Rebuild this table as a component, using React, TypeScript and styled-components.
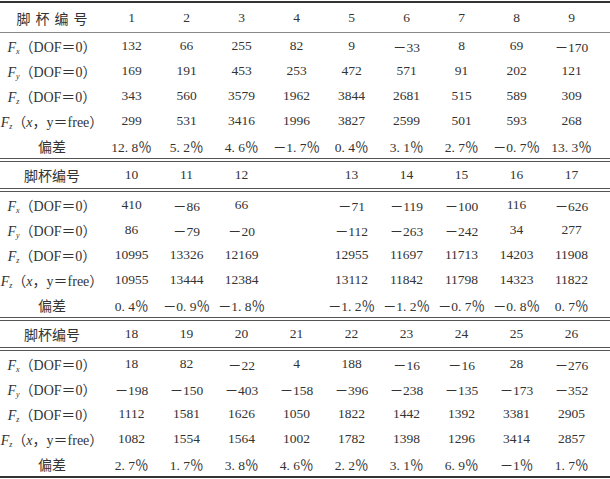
import styled, { createGlobalStyle } from "styled-components"

const GlobalStyle = createGlobalStyle`
    html, body {
        margin: 0;
        padding: 0;
        background: #fff;
    }
`

type BlockData = {
    ids: string[]
    fx: string[]
    fy: string[]
    fz: string[]
    free: string[]
    dev: string[]
}

const blocks: BlockData[] = [
    {
        ids: ["1", "2", "3", "4", "5", "6", "7", "8", "9"],
        fx: ["132", "66", "255", "82", "9", "－33", "8", "69", "－170"],
        fy: ["169", "191", "453", "253", "472", "571", "91", "202", "121"],
        fz: ["343", "560", "3579", "1962", "3844", "2681", "515", "589", "309"],
        free: ["299", "531", "3416", "1996", "3827", "2599", "501", "593", "268"],
        dev: ["12. 8％", "5. 2％", "4. 6％", "－1. 7％", "0. 4％", "3. 1％", "2. 7％", "－0. 7％", "13. 3％"],
    },
    {
        ids: ["10", "11", "12", "", "13", "14", "15", "16", "17"],
        fx: ["410", "－86", "66", "", "－71", "－119", "－100", "116", "－626"],
        fy: ["86", "－79", "－20", "", "－112", "－263", "－242", "34", "277"],
        fz: ["10995", "13326", "12169", "", "12955", "11697", "11713", "14203", "11908"],
        free: ["10955", "13444", "12384", "", "13112", "11842", "11798", "14323", "11822"],
        dev: ["0. 4％", "－0. 9％", "－1. 8％", "", "－1. 2％", "－1. 2％", "－0. 7％", "－0. 8％", "0. 7％"],
    },
    {
        ids: ["18", "19", "20", "21", "22", "23", "24", "25", "26"],
        fx: ["18", "82", "－22", "4", "188", "－16", "－16", "28", "－276"],
        fy: ["－198", "－150", "－403", "－158", "－396", "－238", "－135", "－173", "－352"],
        fz: ["1112", "1581", "1626", "1050", "1822", "1442", "1392", "3381", "2905"],
        free: ["1082", "1554", "1564", "1002", "1782", "1398", "1296", "3414", "2857"],
        dev: ["2. 7％", "1. 7％", "3. 8％", "4. 6％", "2. 2％", "3. 1％", "6. 9％", "－1％", "1. 7％"],
    },
]

function Force({ axis, free }: { axis: string; free?: boolean }) {
    return <>
        <Italic>F<Sub>{axis}</Sub></Italic>
        {free ? <>（<Italic>x</Italic>，y＝free）</> : "（DOF＝0）"}
    </>
}

export default function App() {
    return <>
        <GlobalStyle />
        <Table>
            {blocks.map((b, i) => (
                <Block key={i} $first={i === 0} $last={i === blocks.length - 1}>
                    <HeaderRow $first={i === 0}>
                        <Label $spaced={i === 0}>脚杯编号</Label>
                        {b.ids.map((v, j) => <Cell key={j}>{v}</Cell>)}
                    </HeaderRow>
                    <DataRow>
                        <Label><Force axis="x" /></Label>
                        {b.fx.map((v, j) => <Cell key={j}>{v}</Cell>)}
                    </DataRow>
                    <DataRow>
                        <Label><Force axis="y" /></Label>
                        {b.fy.map((v, j) => <Cell key={j}>{v}</Cell>)}
                    </DataRow>
                    <DataRow>
                        <Label><Force axis="z" /></Label>
                        {b.fz.map((v, j) => <Cell key={j}>{v}</Cell>)}
                    </DataRow>
                    <DataRow>
                        <Label><Force axis="z" free /></Label>
                        {b.free.map((v, j) => <Cell key={j}>{v}</Cell>)}
                    </DataRow>
                    <DataRow>
                        <Label>偏差</Label>
                        {b.dev.map((v, j) => <Cell key={j}>{v}</Cell>)}
                    </DataRow>
                </Block>
            ))}
        </Table>
    </>
}

const Table = styled.div`
    width: 610px;
    padding-top: 1px;
    font-family: "Liberation Serif", "Noto Sans CJK SC", serif;
    font-size: 14px;
    color: #333;
`

const Block = styled.div<{ $first?: boolean; $last?: boolean }>`
    border-top: ${p => p.$first ? "2px solid #333" : "4px double #555"};
    border-bottom: ${p => p.$last ? "2px solid #333" : "none"};
`

const Row = styled.div`
    display: grid;
    grid-template-columns: 104px repeat(9, 1fr);
    padding-right: 11px;
    align-items: center;
`

const HeaderRow = styled(Row)<{ $first?: boolean }>`
    height: ${p => p.$first ? "29px" : "26px"};
    border-bottom: ${p => p.$first ? "1px solid #888" : "4px double #555"};
`

const DataRow = styled(Row)`
    height: 25px;
`

const Label = styled.div<{ $spaced?: boolean }>`
    text-align: center;
    white-space: nowrap;
    letter-spacing: ${p => p.$spaced ? "5px" : "0"};
    padding-left: ${p => p.$spaced ? "5px" : "0"};
    font-size: 14px;
`

const Cell = styled.div`
    text-align: center;
    white-space: nowrap;
    font-size: 13.5px;
`

const Italic = styled.i`
    font-style: italic;
`

const Sub = styled.sub`
    font-size: 8px;
    vertical-align: -2px;
`
